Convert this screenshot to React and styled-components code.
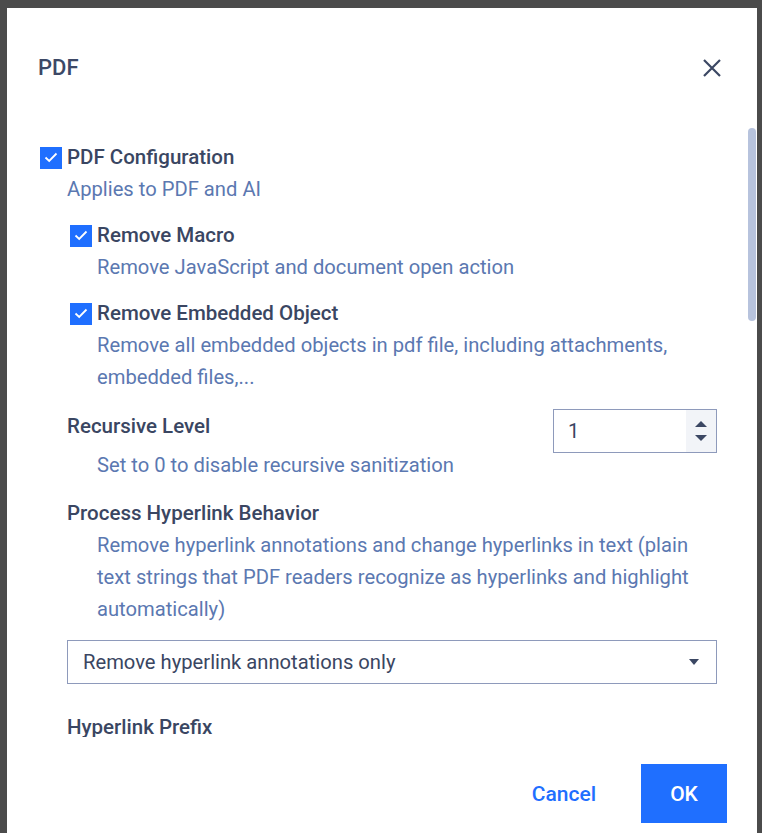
import React from 'react'
import styled, { createGlobalStyle } from 'styled-components'

const Global = createGlobalStyle`
  html, body {
    margin: 0;
    padding: 0;
    height: 100%;
    overflow: hidden;
    background: #4b4b4b;
  }
  body {
    font-family: Roboto, "Liberation Sans", sans-serif;
  }
`

const Overlay = styled.div`
  height: 833px;
  padding: 8px 0 0 7px;
  box-sizing: border-box;
`

const Modal = styled.div`
  width: 750px;
  height: 860px;
  background: #fff;
  display: flex;
  flex-direction: column;
`

const Header = styled.div`
  height: 118px;
  flex: none;
  display: flex;
  align-items: center;
  justify-content: space-between;
  padding: 0 36px 0 31px;
`

const Title = styled.div`
  font-size: 22px;
  font-weight: 500;
  color: #3c4866;
`

const Close = styled.button`
  border: none;
  background: none;
  padding: 0;
  width: 18px;
  height: 18px;
  cursor: pointer;
  display: flex;
  margin-top: 2px;
`

const Body = styled.div`
  position: relative;
  height: 611px;
  flex: none;
  overflow: hidden;
  padding: 16px 40px 0 33px;
  box-sizing: border-box;
`

const Thumb = styled.div`
  position: absolute;
  top: 2px;
  right: 1px;
  width: 8px;
  height: 193px;
  border-radius: 4px;
  background: #b7c3dd;
`

const Group = styled.div`
  margin-left: ${p => p.indent || 0}px;
  margin-top: ${p => p.top || 0}px;
`

const CheckRow = styled.label`
  display: flex;
  align-items: center;
  gap: 5px;
  cursor: pointer;
`

const Box = styled.span`
  width: 22px;
  height: 22px;
  flex: none;
  background: #1f6fff;
  display: flex;
  align-items: center;
  justify-content: center;
`

const Label = styled.div`
  font-size: 20.5px;
  line-height: 31px;
  font-weight: 500;
  color: #3a4662;
`

const Desc = styled.div`
  font-size: 20.2px;
  line-height: 32px;
  color: #5b78b1;
  margin-left: ${p => p.indent || 0}px;
  margin-top: ${p => p.top || 0}px;
`

const FieldRow = styled.div`
  display: flex;
  justify-content: space-between;
  align-items: flex-start;
  margin-left: 27px;
  margin-top: ${p => p.top || 0}px;
`

const NumberBox = styled.div`
  width: 164px;
  height: 44px;
  box-sizing: border-box;
  border: 1px solid #8e9abb;
  display: flex;
  margin-top: -2px;
`

const NumberValue = styled.div`
  flex: 1;
  padding-left: 14px;
  font-size: 20px;
  line-height: 42px;
  color: #3a4662;
`

const Spinner = styled.div`
  width: 30px;
  background: #f2f4f8;
  display: flex;
  flex-direction: column;
  align-items: center;
  justify-content: center;
  gap: 8px;
`

const Arrow = styled.span`
  width: 0;
  height: 0;
  border-left: 6px solid transparent;
  border-right: 6px solid transparent;
  ${p => p.up
    ? 'border-bottom: 6px solid #3b4763;'
    : 'border-top: 6px solid #3b4763;'}
`

const Select = styled.div`
  margin: 15px 0 0 27px;
  height: 44px;
  box-sizing: border-box;
  border: 1px solid #8e9abb;
  display: flex;
  align-items: center;
  justify-content: space-between;
  padding: 0 17px 0 15px;
  font-size: 20.2px;
  color: #3a4662;
`

const Caret = styled.span`
  width: 0;
  height: 0;
  border-left: 5px solid transparent;
  border-right: 5px solid transparent;
  border-top: 6px solid #3b4763;
`

const Footer = styled.div`
  flex: none;
  display: flex;
  justify-content: flex-end;
  align-items: flex-start;
  padding: 27px 30px 0 0;
  gap: 27px;
`

const CancelBtn = styled.button`
  border: none;
  background: none;
  height: 59px;
  padding: 0 18px;
  font-family: inherit;
  font-size: 21px;
  font-weight: 500;
  color: #1f6fff;
  cursor: pointer;
`

const OkBtn = styled.button`
  border: none;
  background: #1f6fff;
  width: 86px;
  height: 59px;
  font-family: inherit;
  font-size: 21px;
  font-weight: 500;
  color: #fff;
  cursor: pointer;
`

function Check({ children }) {
  return (
    <CheckRow>
      <Box>
        <svg width="14" height="11" viewBox="0 0 14 11">
          <path d="M1.5 5.5 L5.2 9 L12.5 1.5" fill="none" stroke="#fff" strokeWidth="1.8" />
        </svg>
      </Box>
      <Label>{children}</Label>
    </CheckRow>
  )
}

export default function App() {
  return (
    <>
      <Global />
      <Overlay>
        <Modal>
          <Header>
            <Title>PDF</Title>
            <Close aria-label="close">
              <svg width="18" height="18" viewBox="0 0 18 18">
                <path d="M1 1 L17 17 M17 1 L1 17" stroke="#3b4763" strokeWidth="2.2" />
              </svg>
            </Close>
          </Header>

          <Body>
            <Thumb />
            <Check>PDF Configuration</Check>
            <Desc indent={27}>Applies to PDF and AI</Desc>

            <Group indent={30} top={15}>
              <Check>Remove Macro</Check>
              <Desc indent={27}>Remove JavaScript and document open action</Desc>
            </Group>

            <Group indent={30} top={15}>
              <Check>Remove Embedded Object</Check>
              <Desc indent={27}>
                Remove all embedded objects in pdf file, including attachments,
                embedded files,...
              </Desc>
            </Group>

            <FieldRow top={18}>
              <Label>Recursive Level</Label>
              <NumberBox>
                <NumberValue>1</NumberValue>
                <Spinner>
                  <Arrow up />
                  <Arrow />
                </Spinner>
              </NumberBox>
            </FieldRow>
            <Desc indent={57} top={-4}>Set to 0 to disable recursive sanitization</Desc>

            <Group indent={27} top={17}>
              <Label>Process Hyperlink Behavior</Label>
              <Desc indent={30}>
                Remove hyperlink annotations and change hyperlinks in text (plain
                text strings that PDF readers recognize as hyperlinks and highlight
                automatically)
              </Desc>
            </Group>

            <Select>
              <span>Remove hyperlink annotations only</span>
              <Caret />
            </Select>

            <Group indent={27} top={28}>
              <Label>Hyperlink Prefix</Label>
            </Group>
          </Body>

          <Footer>
            <CancelBtn>Cancel</CancelBtn>
            <OkBtn>OK</OkBtn>
          </Footer>
        </Modal>
      </Overlay>
    </>
  )
}
